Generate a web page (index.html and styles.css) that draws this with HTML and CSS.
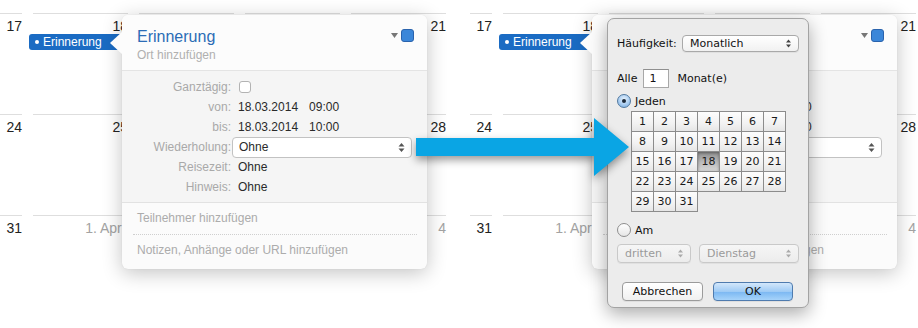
FILE: index.html
```html
<!DOCTYPE html>
<html lang="de">
<head>
<meta charset="utf-8">
<title>Wiederholung</title>
<link rel="stylesheet" href="styles.css">
</head>
<body>
<div class="page">

  <div class="screen">
    <div class="cal">
      <div class="week"><div class="day">17</div><div class="day">18</div><div class="day"></div><div class="day"></div><div class="day">21</div></div>
      <div class="week"><div class="day">24</div><div class="day">25</div><div class="day"></div><div class="day"></div><div class="day">28</div></div>
      <div class="week"><div class="day">31</div><div class="day other">1. April</div><div class="day other"></div><div class="day other"></div><div class="day other">4</div></div>
    </div>
    <div class="pill"><span class="dot"></span>Erinnerung</div>
    <div class="popover">
      <svg class="notch" width="14" height="26" viewBox="0 0 14 26"><polygon points="1,13 14,1 14,25" fill="#fcfcfc"/></svg>
      <div class="pop-head">
        <div class="titles">
          <div class="title">Erinnerung</div>
          <div class="sub">Ort hinzufügen</div>
        </div>
        <div class="tools">
          <svg width="7" height="5" viewBox="0 0 7 5"><polygon points="0,0 7,0 3.5,5" fill="#777"/></svg>
          <span class="swatch"></span>
        </div>
      </div>
      <div class="pop-form">
        <div class="lbl">Ganztägig:</div><div class="val"><span class="check"></span></div>
        <div class="lbl">von:</div><div class="val">18.03.2014<span class="time">09:00</span></div>
        <div class="lbl">bis:</div><div class="val">18.03.2014<span class="time">10:00</span></div>
        <div class="lbl">Wiederholung:</div><div class="val"><div class="select">Ohne<svg class="ud" width="7" height="11" viewBox="0 0 7 11"><path d="M3.5 1 L6.5 4.5 H0.5Z M3.5 10 L6.5 6.5 H0.5Z" fill="#555"/></svg></div></div>
        <div class="lbl">Reisezeit:</div><div class="val">Ohne</div>
        <div class="lbl">Hinweis:</div><div class="val">Ohne</div>
      </div>
      <div class="pop-links">
        <div class="link dotted">Teilnehmer hinzufügen</div>
        <div class="link">Notizen, Anhänge oder URL hinzufügen</div>
      </div>
    </div>
  </div>

  <div class="screen wide">
    <div class="cal">
      <div class="week"><div class="day">17</div><div class="day">18</div><div class="day"></div><div class="day"></div><div class="day">21</div></div>
      <div class="week"><div class="day">24</div><div class="day">25</div><div class="day"></div><div class="day"></div><div class="day">28</div></div>
      <div class="week"><div class="day">31</div><div class="day other">1. April</div><div class="day other"></div><div class="day other"></div><div class="day other">4</div></div>
    </div>
    <div class="pill"><span class="dot"></span>Erinnerung</div>
    <div class="popover">
      <svg class="notch" width="14" height="26" viewBox="0 0 14 26"><polygon points="1,13 14,1 14,25" fill="#fcfcfc"/></svg>
      <div class="pop-head">
        <div class="titles"></div>
        <div class="tools">
          <svg width="7" height="5" viewBox="0 0 7 5"><polygon points="0,0 7,0 3.5,5" fill="#777"/></svg>
          <span class="swatch"></span>
        </div>
      </div>
      <div class="pop-form">
        <div class="lbl"></div><div class="val"></div>
        <div class="lbl"></div><div class="val tail">0</div>
        <div class="lbl"></div><div class="val tail">0</div>
        <div class="lbl"></div><div class="val"><div class="select"><svg class="ud" width="7" height="11" viewBox="0 0 7 11"><path d="M3.5 1 L6.5 4.5 H0.5Z M3.5 10 L6.5 6.5 H0.5Z" fill="#555"/></svg></div></div>
        <div class="lbl"></div><div class="val"></div>
        <div class="lbl"></div><div class="val"></div>
      </div>
      <div class="pop-links">
        <div class="link dotted"></div>
        <div class="link tail-link">gen</div>
      </div>
    </div>
  </div>

  <div class="dialog">
    <div class="d-row freq">
      <span>Häufigkeit:</span>
      <div class="popup freq-pop">Monatlich<svg class="ud" width="7" height="11" viewBox="0 0 7 11"><path d="M3.5 1.5 L6 4.5 H1Z M3.5 9.5 L6 6.5 H1Z" fill="#444"/></svg></div>
    </div>
    <div class="d-row every">
      <span>Alle</span><div class="field">1</div><span>Monat(e)</span>
    </div>
    <div class="d-row opt">
      <span class="radio on"></span><span>Jeden</span>
    </div>
    <div class="days">
      <div class="c">1</div><div class="c">2</div><div class="c">3</div><div class="c">4</div><div class="c">5</div><div class="c">6</div><div class="c">7</div>
      <div class="c">8</div><div class="c">9</div><div class="c">10</div><div class="c">11</div><div class="c">12</div><div class="c">13</div><div class="c">14</div>
      <div class="c">15</div><div class="c">16</div><div class="c">17</div><div class="c sel">18</div><div class="c">19</div><div class="c">20</div><div class="c">21</div>
      <div class="c">22</div><div class="c">23</div><div class="c">24</div><div class="c">25</div><div class="c">26</div><div class="c">27</div><div class="c">28</div>
      <div class="c">29</div><div class="c">30</div><div class="c">31</div>
    </div>
    <div class="d-row opt am">
      <span class="radio"></span><span>Am</span>
    </div>
    <div class="d-row pops">
      <div class="popup dis w1">dritten<svg class="ud" width="7" height="11" viewBox="0 0 7 11"><path d="M3.5 1.5 L6 4.5 H1Z M3.5 9.5 L6 6.5 H1Z" fill="#aaa"/></svg></div>
      <div class="popup dis w2">Dienstag<svg class="ud" width="7" height="11" viewBox="0 0 7 11"><path d="M3.5 1.5 L6 4.5 H1Z M3.5 9.5 L6 6.5 H1Z" fill="#aaa"/></svg></div>
    </div>
    <div class="d-row buttons">
      <div class="btn">Abbrechen</div>
      <div class="btn ok">OK</div>
    </div>
  </div>

  <svg class="arrow" width="240" height="80" viewBox="0 0 240 80">
    <polygon points="6,27 184,27 184,7 219,36 184,65 184,45 6,45" fill="#0aa5e4"/>
  </svg>
</div>
</body>
</html>
```

FILE: styles.css
```css
html, body {
  margin: 0;
  padding: 0;
  background: #fff;
}

.page {
  position: relative;
  display: flex;
  gap: 23px;
  width: 918px;
  height: 328px;
  overflow: hidden;
  font-family: "Liberation Sans", Arial, sans-serif;
}

.screen {
  position: relative;
  flex: none;
  width: 447px;
  height: 328px;
}

.screen.wide {
  width: 448px;
}

/* calendar background */
.cal {
  padding-top: 13px;
}

.week {
  display: grid;
  grid-template-columns: 22px repeat(4, 106px);
  height: 101px;
}

.day {
  border-top: 1px solid #dedede;
  padding-top: 4px;
  text-align: right;
  font-size: 14px;
  line-height: 16px;
  color: #222;
  white-space: nowrap;
}

.day + .day {
  margin-left: 11px;
}

.day.other {
  color: #a3a3a3;
}

/* event pill */
.pill {
  position: absolute;
  left: 29px;
  top: 34px;
  width: 93px;
  height: 16px;
  box-sizing: border-box;
  padding-left: 6px;
  background: #1a6bc3;
  border-radius: 3px 0 0 3px;
  color: #fff;
  font-size: 12px;
  line-height: 16px;
  display: flex;
  align-items: center;
}

.pill .dot {
  width: 4px;
  height: 4px;
  border-radius: 50%;
  background: #fff;
  margin-right: 4px;
}

/* popover */
.popover {
  position: absolute;
  left: 122px;
  top: 15px;
  width: 305px;
  height: 254px;
  border-radius: 6px;
  background: #fbfbfb;
  box-shadow: 0 4px 20px rgba(0, 0, 0, 0.24), 0 0 1px rgba(0, 0, 0, 0.12);
}

.notch {
  position: absolute;
  left: -13px;
  top: 15px;
}

.pop-head {
  height: 56px;
  box-sizing: border-box;
  padding: 12px 13px 0 15px;
  display: flex;
  background: #fcfcfc;
  border-bottom: 1px solid #e4e4e4;
  border-radius: 6px 6px 0 0;
}

.titles {
  flex: 1;
}

.title {
  font-size: 16px;
  line-height: 19px;
  color: #2b6cb6;
}

.sub {
  font-size: 12px;
  line-height: 15px;
  margin-top: 2px;
  color: #b0b0b0;
}

.tools {
  display: flex;
  align-items: center;
  gap: 3px;
  height: 13px;
  margin-top: 2px;
}

.swatch {
  width: 13px;
  height: 13px;
  box-sizing: border-box;
  border-radius: 3px;
  background: #3c87d9;
  border: 1px solid #2a63ad;
}

.pop-form {
  display: grid;
  grid-template-columns: 109px 1fr;
  column-gap: 7px;
  grid-auto-rows: 20px;
  align-items: center;
  padding: 6px 0 5px;
  background: #f5f5f5;
  border-bottom: 1px solid #e2e2e2;
  font-size: 12px;
}

.lbl {
  text-align: right;
  color: #a9a9a9;
  white-space: nowrap;
}

.val {
  color: #2a2a2a;
  white-space: nowrap;
  display: flex;
  align-items: center;
}

/* the last digit of the time, the only part left uncovered by the dialog */
.val.tail {
  padding-left: 97px;
}

.time {
  margin-left: 11px;
}

.check {
  width: 12px;
  height: 12px;
  box-sizing: border-box;
  margin-left: 1px;
  border: 1px solid #b3b3b3;
  border-radius: 3px;
  background: #fff;
}

.select {
  position: relative;
  margin-left: -6px;
  width: 180px;
  height: 21px;
  box-sizing: border-box;
  padding-left: 6px;
  border: 1px solid #c2c2c2;
  border-radius: 4px;
  background: #fff;
  line-height: 19px;
  display: flex;
  align-items: center;
}

.ud {
  position: absolute;
  right: 6px;
  top: 50%;
  margin-top: -5.5px;
}

.pop-links {
  font-size: 12px;
  color: #acacac;
}

.link {
  height: 31px;
  line-height: 31px;
  margin: 0 10px 0 11px;
  padding-left: 4px;
}

.link.tail-link {
  padding-left: 201px;
}

.link.dotted {
  border-bottom: 1px dotted #cfcfcf;
}

/* recurrence dialog */
.dialog {
  position: absolute;
  left: 607px;
  top: 18px;
  width: 202px;
  height: 290px;
  box-sizing: border-box;
  padding: 16px 9px 0;
  background: #ececec;
  border: 1px solid #a3a3a3;
  border-radius: 7px;
  box-shadow: 0 6px 18px rgba(0, 0, 0, 0.33);
  font-family: "DejaVu Sans", Verdana, sans-serif;
  font-size: 11px;
  color: #111;
  z-index: 2;
}

.d-row {
  display: flex;
  align-items: center;
}

.freq {
  height: 17px;
}

.popup {
  position: relative;
  height: 17px;
  box-sizing: border-box;
  padding-left: 7px;
  border: 1px solid #a9a9a9;
  border-radius: 4px;
  background: linear-gradient(#ffffff, #f1f1f1);
  display: flex;
  align-items: center;
  box-shadow: 0 1px 0 rgba(0, 0, 0, 0.05);
}

.freq-pop {
  margin-left: auto;
  width: 117px;
}

.every {
  margin-top: 17px;
  height: 19px;
}

.field {
  width: 26px;
  height: 19px;
  box-sizing: border-box;
  margin: 0 8px 0 6px;
  padding-left: 5px;
  border: 1px solid #a8a8a8;
  border-top-color: #8f8f8f;
  background: #fff;
  line-height: 17px;
}

.opt {
  margin-top: 6px;
  height: 14px;
}

.radio {
  width: 14px;
  height: 14px;
  box-sizing: border-box;
  border-radius: 50%;
  border: 1px solid #8e8e8e;
  background: linear-gradient(#ffffff, #e6e6e6);
  margin-right: 4px;
  position: relative;
}

.radio.on {
  border-color: #52799f;
  background: radial-gradient(circle at 50% 35%, #e6f1fc 0%, #a9cdf1 55%, #6fa6dc 100%);
}

.radio.on::after {
  content: "";
  position: absolute;
  left: 4px;
  top: 4px;
  width: 4px;
  height: 4px;
  border-radius: 50%;
  background: #1c2a3a;
}

.days {
  display: grid;
  grid-template-columns: repeat(7, 22px);
  grid-auto-rows: 20px;
  width: 155px;
  box-sizing: border-box;
  margin: 3px 0 0 14px;
  border-top: 1px solid #8c8c8c;
  border-left: 1px solid #8c8c8c;
  font-size: 11px;
}

.c {
  box-sizing: border-box;
  border-right: 1px solid #8c8c8c;
  border-bottom: 1px solid #8c8c8c;
  background: linear-gradient(#fdfdfd, #f2f2f2 60%, #e6e6e6);
  text-align: center;
  line-height: 19px;
  color: #1a1a1a;
}

.c.sel {
  background: linear-gradient(#8e8e8e, #bcbcbc 55%, #d6d6d6);
  box-shadow: inset 0 1px 3px rgba(0, 0, 0, 0.35);
}

.am {
  margin-top: 11px;
}

.pops {
  margin-top: 7px;
  gap: 8px;
}

.popup.dis {
  height: 19px;
  color: #9a9a9a;
  border-color: #c9c9c9;
  background: linear-gradient(#f6f6f6, #ececec);
}

.w1 {
  width: 74px;
}

.w2 {
  width: 100px;
}

.buttons {
  margin: 19px 0 0 5px;
  gap: 10px;
}

.btn {
  width: 81px;
  height: 19px;
  box-sizing: border-box;
  border: 1px solid #9b9b9b;
  border-radius: 4px;
  background: linear-gradient(#ffffff, #f0f0f0);
  text-align: center;
  line-height: 17px;
  box-shadow: 0 1px 0 rgba(0, 0, 0, 0.06);
}

.btn.ok {
  width: 80px;
  border-color: #4f7bae;
  background: linear-gradient(#d3e7fb, #9fcbf5 50%, #7ab7f2 51%, #a6d3fa);
}

/* arrow between the two screenshots */
.arrow {
  position: absolute;
  left: 410px;
  top: 111px;
  z-index: 3;
  filter: drop-shadow(0 4px 4px rgba(0, 0, 0, 0.4));
}
```
